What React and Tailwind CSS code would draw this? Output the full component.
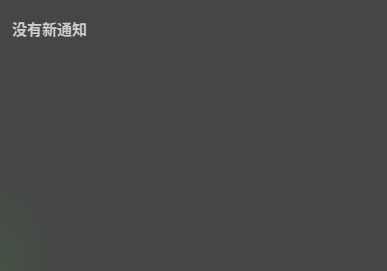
import React from 'react'

const App = () => {
  return (
    <div className='relative w-[387px] h-[271px] overflow-hidden bg-[#464646]'>
      {/* faint green glow bottom-left */}
      <div className='absolute inset-0 bg-[radial-gradient(ellipse_60px_110px_at_0%_100%,rgba(68,90,68,0.6)_0%,rgba(68,90,68,0)_100%)]' />
      <div className='relative px-3 pt-[19px]'>
        <p className='text-[15px] leading-[20px] font-bold text-[#cdcdcd] font-["Noto_Sans_CJK_SC",sans-serif]'>没有新通知</p>
      </div>
    </div>
  )
}

export default App
